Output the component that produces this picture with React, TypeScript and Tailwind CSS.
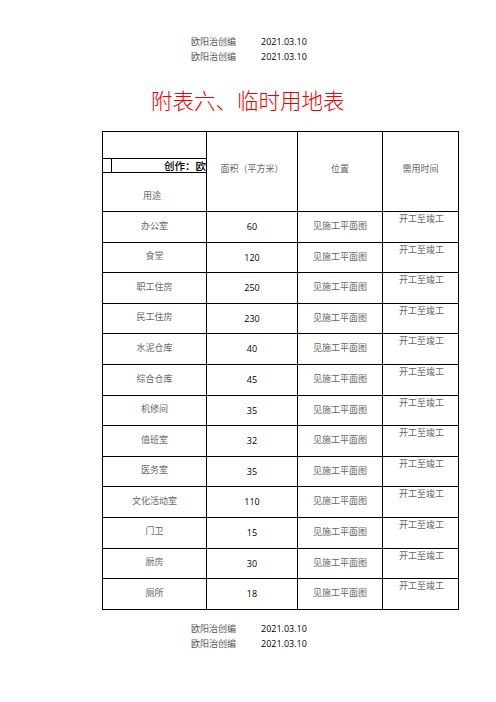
import React from "react";

const CJK = "font-['Noto_Sans_CJK_SC',sans-serif]";
const NUM = "font-['Open_Sans','Liberation_Sans',sans-serif]";

const ROWS = [
  { yongtu: "办公室", mianji: "60" },
  { yongtu: "食堂", mianji: "120" },
  { yongtu: "职工住房", mianji: "250" },
  { yongtu: "民工住房", mianji: "230" },
  { yongtu: "水泥仓库", mianji: "40" },
  { yongtu: "综合仓库", mianji: "45" },
  { yongtu: "机修间", mianji: "35" },
  { yongtu: "值班室", mianji: "32" },
  { yongtu: "医务室", mianji: "35" },
  { yongtu: "文化活动室", mianji: "110" },
  { yongtu: "门卫", mianji: "15" },
  { yongtu: "厨房", mianji: "30" },
  { yongtu: "厕所", mianji: "18" },
];

function Stamp() {
  return (
    <div className="flex items-center h-[15px] pl-[191px]">
      <span className={`w-[70px] text-[9px] leading-[15px] text-[#555] ${CJK}`}>欧阳治创编</span>
      <span className={`text-[9px] leading-[15px] text-black ${NUM}`}>2021.03.10</span>
    </div>
  );
}

export default function App() {
  return (
    <div className="w-[496px] h-[702px] bg-white overflow-hidden">
      {/* 页眉 */}
      <div className="pt-[34px]">
        <Stamp />
        <Stamp />
      </div>

      {/* 标题 */}
      <div className={`mt-[24px] pl-[151px] h-[24px] text-[21.5px] leading-[24px] text-[#f00000] font-light ${CJK}`}>
        附表六、临时用地表
      </div>

      {/* 表格 */}
      <div className="mt-[19px] ml-[102px] w-[357px] border-l border-t border-black grid grid-cols-[104px_91px_85px_76px]">
        {/* 表头 */}
        <div className="h-[80px] border-r border-b border-black flex flex-col">
          <div className="h-[26px]" />
          <div className="h-[15px] border-t border-b border-black flex">
            <div className="w-[9px] border-r border-black" />
            <div className="flex-1 flex justify-end">
              <span className={`whitespace-nowrap text-[10.5px] leading-[13px] text-black font-medium ${CJK}`}>创作：欧</span>
            </div>
          </div>
          <div className={`mt-[17px] text-center pr-[5px] text-[9px] leading-[12px] text-[#666] ${CJK}`}>用途</div>
        </div>
        <div className={`h-[80px] border-r border-b border-black flex items-center justify-center pb-[6px] text-[9px] text-[#666] ${CJK}`}>
          面积（平方米）
        </div>
        <div className={`h-[80px] border-r border-b border-black flex items-center justify-center pb-[6px] text-[9px] text-[#666] ${CJK}`}>
          位置
        </div>
        <div className={`h-[80px] border-r border-b border-black flex items-center justify-center pb-[6px] text-[9px] text-[#666] ${CJK}`}>
          需用时间
        </div>

        {/* 数据行 */}
        {ROWS.map((r) => (
          <React.Fragment key={r.yongtu}>
            <div className={`h-[30.6px] border-r border-b border-black flex items-center justify-center pb-[3px] text-[9px] text-[#666] ${CJK}`}>
              {r.yongtu}
            </div>
            <div className={`h-[30.6px] border-r border-b border-black flex items-center justify-center text-[9px] font-medium text-black ${NUM}`}>
              {r.mianji}
            </div>
            <div className={`h-[30.6px] border-r border-b border-black flex items-center justify-center pb-[2px] text-[9px] text-[#666] ${CJK}`}>
              见施工平面图
            </div>
            <div className={`h-[30.6px] border-r border-b border-black flex justify-center pt-[1px] pl-[2px] text-[9px] leading-[12px] text-[#666] ${CJK}`}>
              开工至竣工
            </div>
          </React.Fragment>
        ))}
      </div>

      {/* 页脚 */}
      <div className="mt-[11px]">
        <Stamp />
        <Stamp />
      </div>
    </div>
  );
}
